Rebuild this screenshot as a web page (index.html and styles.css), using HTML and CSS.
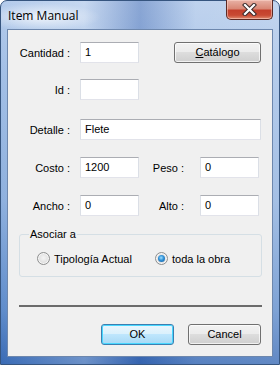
FILE: index.html
```html
<!DOCTYPE html>
<html lang="es">
<head>
<meta charset="utf-8">
<title>Item Manual</title>
<link rel="stylesheet" href="styles.css">
</head>
<body>
<div class="window">
  <div class="titlebar">
    <span class="title">Item Manual</span>
    <div class="close">
      <svg width="15" height="13" viewBox="0 0 15 13">
        <path d="M3 2 L12 11 M12 2 L3 11" stroke="#3a2a2a" stroke-width="4.2" stroke-linecap="square" fill="none"/>
        <path d="M3 2 L12 11 M12 2 L3 11" stroke="#ffffff" stroke-width="2.2" stroke-linecap="square" fill="none"/>
      </svg>
    </div>
  </div>
  <div class="client">
    <div class="row r1">
      <span class="lbl">Cantidad :</span>
      <div class="in w59">1</div>
      <div class="btn catalog"><u>C</u>atálogo</div>
    </div>
    <div class="row r2">
      <span class="lbl">Id :</span>
      <div class="in w59"></div>
    </div>
    <div class="row r3">
      <span class="lbl">Detalle :</span>
      <div class="in w181">Flete</div>
    </div>
    <div class="row r4">
      <span class="lbl">Costo :</span>
      <div class="in w59">1200</div>
      <span class="lbl2">Peso :</span>
      <div class="in w59">0</div>
    </div>
    <div class="row r5">
      <span class="lbl">Ancho :</span>
      <div class="in w59">0</div>
      <span class="lbl2">Alto :</span>
      <div class="in w59">0</div>
    </div>
    <fieldset class="group">
      <legend>Asociar a</legend>
      <div class="radios">
        <div class="opt first"><span class="radio"></span><span>Tipología Actual</span></div>
        <div class="opt"><span class="radio checked"></span><span>toda la obra</span></div>
      </div>
    </fieldset>
    <div class="sep"></div>
    <div class="buttons">
      <div class="btn ok">OK</div>
      <div class="btn">Cancel</div>
    </div>
  </div>
</div>
</body>
</html>
```
FILE: styles.css
```css
html, body {
  margin: 0;
  padding: 0;
  background: #ffffff;
}
.window {
  box-sizing: border-box;
  width: 280px;
  height: 365px;
  display: flex;
  flex-direction: column;
  border: 1px solid #36557f;
  border-radius: 7px 7px 0 0;
  padding: 0 6px 7px 6px;
  background:
    radial-gradient(ellipse 60px 14px at 40px 16px, rgba(255,255,255,0.75), rgba(255,255,255,0) 100%),
    linear-gradient(90deg, rgba(255,255,255,0) 0%, rgba(255,255,255,0.25) 30%, rgba(40,80,160,0.3) 50%, rgba(255,255,255,0.15) 70%, rgba(255,255,255,0.2) 100%),
    linear-gradient(180deg, #b4cbeb 0%, #a2bfe6 20%, #8eb0de 55%, #5f8ccb 85%, #3a6bb5 100%);
  font-family: "Liberation Sans", Arial, sans-serif;
  font-size: 11px;
  color: #000;
}
.titlebar {
  height: 28px;
  display: flex;
  align-items: flex-start;
}
.title {
  font-family: "Open Sans", "Noto Sans", sans-serif;
  font-size: 12px;
  line-height: 14px;
  margin-top: 8px;
  padding-left: 1px;
  color: #000;
}
.close {
  margin-left: auto;
  margin-top: -1px;
  margin-right: 0;
  box-sizing: border-box;
  width: 47px;
  height: 20px;
  border: 1px solid #5c2a24;
  border-top: none;
  border-radius: 0 0 5px 5px;
  background: linear-gradient(180deg, #e8b2a6 0%, #d98876 45%, #c4402c 55%, #c84a33 80%, #df8a6e 100%);
  display: flex;
  align-items: center;
  justify-content: center;
  box-shadow: inset 0 0 0 1px rgba(255,220,210,0.5);
}
.close svg { display: block; margin-top: -1px; }
.client {
  flex: 1;
  border: 1px solid #6d87ad;
  background: #f0f0f0;
  display: flex;
  flex-direction: column;
}
.row {
  display: flex;
  align-items: center;
  height: 21px;
}
.r1 { margin-top: 12px; }
.r2 { margin-top: 16px; }
.r3 { margin-top: 19px; }
.r4 { margin-top: 17px; }
.r5 { margin-top: 17px; }
.lbl {
  width: 62px;
  margin-right: 10px;
  text-align: right;
  white-space: nowrap;
}
.lbl2 {
  width: 45px;
  margin-right: 16px;
  text-align: right;
  white-space: nowrap;
}
.in {
  box-sizing: border-box;
  height: 21px;
  background: #fff;
  border: 1px solid #e2e3ea;
  border-top-color: #abadb3;
  border-left-color: #dbdfe6;
  border-right-color: #dbdfe6;
  padding: 3px 0 0 4px;
  line-height: 13px;
}
.w59 { width: 59px; }
.w181 { width: 181px; }
.btn {
  box-sizing: border-box;
  width: 73px;
  height: 21px;
  border: 1px solid #707070;
  border-radius: 3px;
  background: linear-gradient(180deg, #f2f2f2 0%, #ebebeb 50%, #dddddd 50%, #cfcfcf 100%);
  box-shadow: inset 0 0 0 1px rgba(255,255,255,0.7);
  display: flex;
  align-items: center;
  justify-content: center;
  line-height: 13px;
}
.catalog {
  width: 87px;
  margin-left: 35px;
}
.group {
  box-sizing: border-box;
  width: 243px;
  margin: 12px 0 0 11px;
  padding: 0 0 11px 17px;
  border: 1px solid #d5dfe5;
  border-radius: 3px;
  min-width: 0;
}
.group legend {
  margin-left: -8px;
  padding: 0 1px;
  line-height: 12px;
}
.radios {
  margin-top: 12px;
  display: flex;
  align-items: center;
  height: 13px;
}
.opt {
  display: flex;
  align-items: center;
  gap: 4px;
}
.opt.first { width: 118px; }
.radio {
  box-sizing: border-box;
  position: relative;
  width: 13px;
  height: 13px;
  border-radius: 50%;
  border: 1px solid #8e8f8f;
  background: radial-gradient(circle at 50% 45%, #f4f4f4 0%, #e2e2e2 55%, #cfcfcf 100%);
  box-shadow: inset 0 0 0 1px #f6f6f6;
}
.radio.checked::after {
  content: "";
  position: absolute;
  left: 2px;
  top: 2px;
  width: 7px;
  height: 7px;
  border-radius: 50%;
  background: radial-gradient(circle at 45% 40%, #9fe0ff 0%, #2f8fd6 45%, #145a9a 100%);
}
.sep {
  margin: 28px 10px 0 11px;
  height: 2px;
  background: #6b6b6b;
}
.buttons {
  margin-top: 17px;
  display: flex;
  justify-content: flex-end;
  gap: 14px;
  padding-right: 11px;
}
.btn.ok {
  border-color: #3c7fb1;
  background: linear-gradient(180deg, #eaf6fd 0%, #d9f0fc 50%, #bee6fd 50%, #a7d9f5 100%);
  box-shadow: inset 0 0 0 1px #48d7ff;
}
```
